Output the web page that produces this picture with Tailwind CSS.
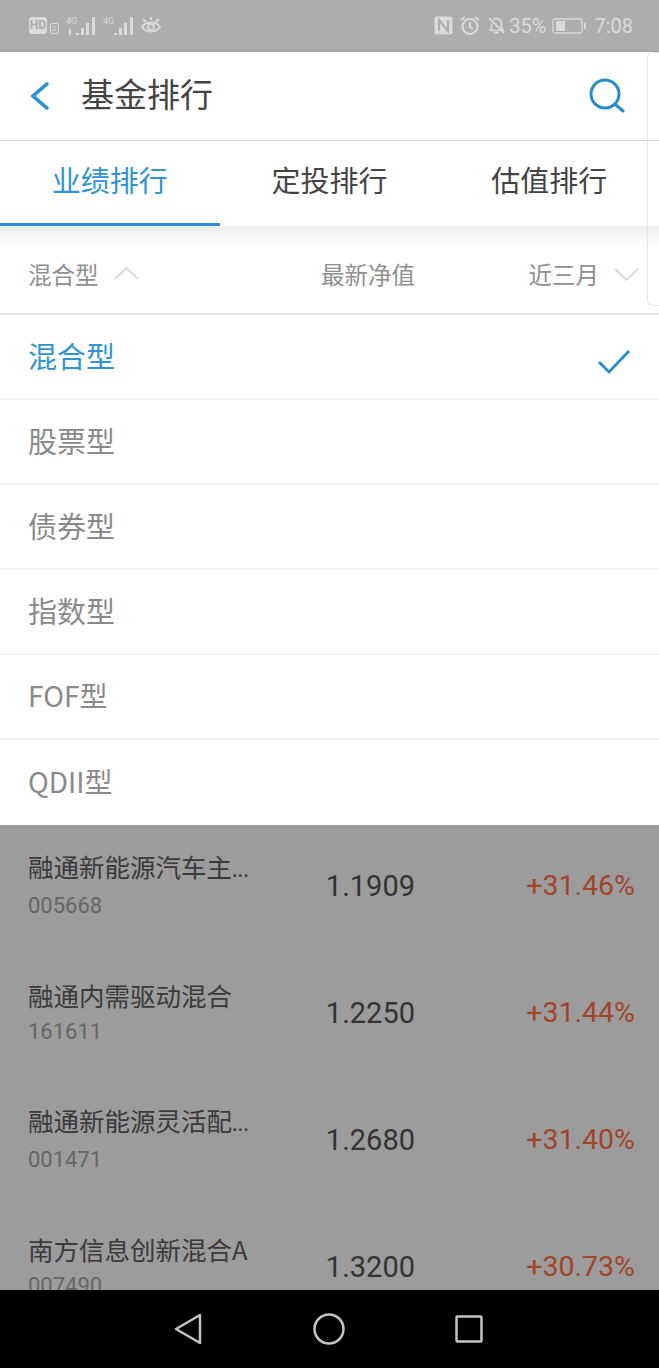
<!DOCTYPE html>
<html lang="zh">
<head>
    <meta charset="UTF-8">
    <meta name="viewport" content="width=device-width, initial-scale=1.0">
    <title>基金排行</title>
    <script src="https://cdn.jsdelivr.net/npm/@tailwindcss/browser@4"></script>
</head>
<body class="bg-white font-['Roboto','Noto_Sans_CJK_SC',sans-serif]">
<div class="relative w-[659px] h-[1368px] overflow-hidden flex flex-col">

    <!-- Status bar -->
    <div class="h-[52px] shrink-0 bg-[#adadad] border-b border-[#a4a4a4] flex items-center justify-between pl-[29px] pr-[26px] text-[#dadada]">
        <div class="flex items-center">
            <span class="flex items-center gap-[3px] w-[37px]">
                <span class="bg-[#dadada] text-[#adadad] rounded-[3px] text-[12px] font-bold leading-[17px] w-[18px] text-center">HD</span>
                <span class="border border-[#dadada] rounded-[2px] text-[8px] leading-[9px] px-[1px] mt-[6px]">2</span>
            </span>
            <svg width="31" height="20" viewBox="0 0 31 20" fill="#dadada"><text x="0" y="8" font-size="9" font-family="Roboto">4G</text><rect x="3" y="13" width="2" height="6"/><rect x="10" y="17" width="3" height="2"/><rect x="15" y="12" width="3" height="7"/><rect x="20" y="7" width="3" height="12"/><rect x="26" y="1" width="3" height="18"/></svg>
            <svg width="30" height="20" viewBox="0 0 30 20" fill="#dadada" class="ml-[6px]"><text x="0" y="8" font-size="9" font-family="Roboto">4G</text><rect x="11" y="17" width="3" height="2"/><rect x="16" y="12" width="3" height="7"/><rect x="21" y="7" width="3" height="12"/><rect x="27" y="1" width="3" height="18"/></svg>
            <svg width="22" height="20" viewBox="0 0 22 20" fill="none" stroke="#dadada" stroke-width="2" class="ml-[7px]"><path d="M2 11c4-6 14-6 18 0-4 6-14 6-18 0z"/><circle cx="11" cy="11" r="3"/><path d="M3 3l3 3M11 1v3M19 3l-3 3"/></svg>
        </div>
        <div class="flex items-center text-[20px]">
            <svg width="19" height="19" viewBox="0 0 19 19"><rect x="0.500" y="0.500" width="18" height="18" rx="2" fill="#dadada"/><path d="M5 15V4l9 11V4" fill="none" stroke="#adadad" stroke-width="2"/></svg>
            <svg width="20" height="21" viewBox="0 0 20 21" fill="none" stroke="#dadada" stroke-width="2" class="ml-[7px]"><circle cx="10" cy="11.500" r="7.500"/><path d="M10 7v5l3 2M1 5l4-3M19 5l-4-3"/></svg>
            <svg width="19" height="21" viewBox="0 0 21 21" fill="none" stroke="#dadada" stroke-width="1.800" class="ml-[7px]"><path d="M3 16h15l-2-3V8a5.500 5.500 0 0 0-9-4M5 8v5l-2 3M8 18.500h5M2 2l17 17"/></svg>
            <span class="ml-[3px]">35%</span>
            <svg width="35" height="18" viewBox="0 0 35 18" fill="none" class="ml-[6px]"><rect x="1" y="2" width="29" height="14" rx="2" stroke="#dadada" stroke-width="1.300"/><rect x="4" y="4" width="9" height="10" fill="#dadada"/><rect x="32" y="6" width="2" height="6" fill="#dadada"/></svg>
            <span class="ml-[7px]">7:08</span>
        </div>
    </div>

    <div class="relative flex-1 overflow-hidden">
        <!-- Header -->
        <div class="h-[89px] bg-white border-b border-[#d4d4d4] flex items-center justify-between pl-[30px] pr-[34px]">
            <div class="flex items-center gap-[31px]">
                <svg width="20" height="30" viewBox="0 0 20 30" fill="none" stroke="#2a8fd8" stroke-width="3.500"><path d="M18 2L3 15l15 13"/></svg>
                <span class="text-[33px] text-[#444] leading-none font-['Noto_Sans_CJK_SC'] mb-[5px]">基金排行</span>
            </div>
            <svg width="36" height="36" viewBox="0 0 36 36" fill="none" stroke="#2a8ccb" stroke-width="3" stroke-linecap="round"><circle cx="16" cy="16" r="14"/><path d="M27 27l7 6"/></svg>
        </div>

        <!-- Tabs -->
        <div class="h-[85px] bg-white grid grid-cols-3 text-[29px] text-center font-['Noto_Sans_CJK_SC'] text-[#444]">
            <div class="flex items-center justify-center text-[#2f93d5] border-b-[3px] border-[#2a8fd8] pb-[4px]">业绩排行</div>
            <div class="flex items-center justify-center pb-[7px]">定投排行</div>
            <div class="flex items-center justify-center pb-[7px]">估值排行</div>
        </div>

        <!-- Shadow under the tabs -->
        <div class="h-[21px] bg-gradient-to-b from-[#eeeeee] to-white"></div>

        <!-- Filter row -->
        <div class="h-[68px] bg-white border-b-2 border-[#e4e4e4] pb-[11px] flex items-center justify-between pl-[28px] pr-[20px] text-[23.500px] text-[#8f8f8f] font-['Noto_Sans_CJK_SC']">
            <div class="flex items-center">
                <div class="w-[293px] flex items-center gap-[15px]">
                    <span>混合型</span>
                    <svg width="25" height="14" viewBox="0 0 25 14" fill="none" stroke="#d0d0d0" stroke-width="1.500" class="mb-[3px]"><path d="M1 13L12.500 2 24 13"/></svg>
                </div>
                <span>最新净值</span>
            </div>
            <div class="flex items-center gap-[15px]">
                <span>近三月</span>
                <svg width="25" height="14" viewBox="0 0 25 14" fill="none" stroke="#d0d0d0" stroke-width="1.500"><path d="M1 1l11.500 11L24 1"/></svg>
            </div>
        </div>

        <!-- Dropdown options -->
        <div class="bg-white text-[29px] text-[#8a8a8a] font-['Noto_Sans_CJK_SC']">
            <div class="h-[85px] border-b-2 border-[#f2f2f2] flex items-center justify-between pl-[28px] pr-[28px] text-[#2f93d5]">
                <span class="mb-[1px]">混合型</span>
                <svg width="34" height="26" viewBox="0 0 34 26" fill="none" stroke="#2a8ccb" stroke-width="2.800" class="mt-[11px]"><path d="M2 13l10 10L32 2"/></svg>
            </div>
            <div class="h-[85px] border-b-2 border-[#f2f2f2] flex items-center pl-[28px] pb-[1px]">股票型</div>
            <div class="h-[85px] border-b-2 border-[#f2f2f2] flex items-center pl-[28px] pb-[1px]">债券型</div>
            <div class="h-[85px] border-b-2 border-[#f2f2f2] flex items-center pl-[28px] pb-[1px]">指数型</div>
            <div class="h-[85px] border-b-2 border-[#f2f2f2] flex items-center pl-[28px] pb-[3px] text-[28px]">FOF型</div>
            <div class="h-[85px] flex items-center pl-[28px] pb-[4px] text-[28px]">QDII型</div>
        </div>

        <!-- Fund list behind the scrim -->
        <div class="bg-[#9c9c9d] h-[470px] pt-[1px]">
            <div class="h-[127px] flex items-center pl-[28px] pr-[24px]">
                <div class="w-[270px] pb-[7px]">
                    <div class="text-[25.500px] leading-[36px] text-[#3a3a3a] font-['Noto_Sans_CJK_SC']">融通新能源汽车主<span class="text-[20px]">...</span></div>
                    <div class="text-[22px] leading-[36px] text-[#666] mt-[1px]">005668</div>
                </div>
                <div class="w-[117px] text-[29px] text-[#333] pb-[6px] text-right">1.1909</div>
                <div class="flex-1 text-[28.500px] text-[#a0452a] pb-[6px] text-right">+31.46%</div>
            </div>
            <div class="h-[127px] flex items-center pl-[28px] pr-[24px]">
                <div class="w-[270px] pb-[7px]">
                    <div class="text-[25.500px] leading-[36px] text-[#3a3a3a] font-['Noto_Sans_CJK_SC']">融通内需驱动混合</div>
                    <div class="text-[22px] leading-[36px] text-[#666] mt-[1px]">161611</div>
                </div>
                <div class="w-[117px] text-[29px] text-[#333] pb-[6px] text-right">1.2250</div>
                <div class="flex-1 text-[28.500px] text-[#a0452a] pb-[6px] text-right">+31.44%</div>
            </div>
            <div class="h-[127px] flex items-center pl-[28px] pr-[24px]">
                <div class="w-[270px] pb-[7px]">
                    <div class="text-[25.500px] leading-[36px] text-[#3a3a3a] font-['Noto_Sans_CJK_SC']">融通新能源灵活配<span class="text-[20px]">...</span></div>
                    <div class="text-[22px] leading-[36px] text-[#666] mt-[1px]">001471</div>
                </div>
                <div class="w-[117px] text-[29px] text-[#333] pb-[6px] text-right">1.2680</div>
                <div class="flex-1 text-[28.500px] text-[#a0452a] pb-[6px] text-right">+31.40%</div>
            </div>
            <div class="h-[127px] flex items-center pl-[28px] pr-[24px]">
                <div class="w-[270px] pb-[7px]">
                    <div class="text-[25.500px] leading-[36px] text-[#3a3a3a] font-['Noto_Sans_CJK_SC']">南方信息创新混合A</div>
                    <div class="text-[22px] leading-[36px] text-[#666] mt-[1px]">007490</div>
                </div>
                <div class="w-[117px] text-[29px] text-[#333] pb-[6px] text-right">1.3200</div>
                <div class="flex-1 text-[28.500px] text-[#a0452a] pb-[6px] text-right">+30.73%</div>
            </div>
        </div>

        <!-- Faint side handle over the header -->
        <div class="absolute top-0 right-0 w-[12px] h-[254px] border border-r-0 border-[#e6e6e6] rounded-l-[6px] pointer-events-none"></div>
    </div>

    <!-- Nav bar -->
    <div class="relative z-10 h-[78px] shrink-0 bg-black flex items-center justify-center gap-[111px] pr-[3px]">
        <svg width="28" height="32" viewBox="0 0 28 32" fill="none" stroke="#c4c4c4" stroke-width="2.500" stroke-linejoin="round"><path d="M26 2v28L2 16z"/></svg>
        <svg width="32" height="32" viewBox="0 0 32 32" fill="none" stroke="#c4c4c4" stroke-width="2.500"><ellipse cx="16" cy="16" rx="14.500" ry="14.500"/></svg>
        <svg width="28" height="28" viewBox="0 0 28 28" fill="none" stroke="#c4c4c4" stroke-width="2.500" class="-ml-[1px]"><rect x="1.500" y="1.500" width="25" height="25" rx="1"/></svg>
    </div>
</div>
</body>
</html>
